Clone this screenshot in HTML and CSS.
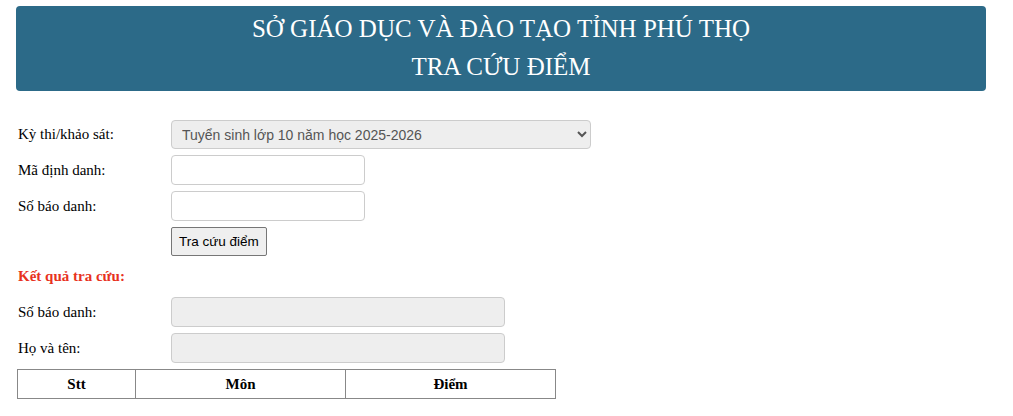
FILE: index.html
```html
<!DOCTYPE html>
<html lang="vi">
<head>
    <meta charset="UTF-8">
    <title>Tra cứu điểm</title>
    <link rel="stylesheet" href="styles.css">
</head>
<body>
    <div class="wrap">
        <div class="header">
            <div>SỞ GIÁO DỤC VÀ ĐÀO TẠO TỈNH PHÚ THỌ</div>
            <div>TRA CỨU ĐIỂM</div>
        </div>
        <div class="form">
            <div class="row">
                <label>Kỳ thi/khảo sát:</label>
                <select class="sel">
                    <option>Tuyển sinh lớp 10 năm học 2025-2026</option>
                </select>
            </div>
            <div class="row">
                <label>Mã định danh:</label>
                <input type="text" class="inp">
            </div>
            <div class="row">
                <label>Số báo danh:</label>
                <input type="text" class="inp">
            </div>
            <div class="row">
                <label></label>
                <button class="btn">Tra cứu điểm</button>
            </div>
            <div class="result-title">Kết quả tra cứu:</div>
            <div class="row">
                <label>Số báo danh:</label>
                <input type="text" class="inp ro" readonly>
            </div>
            <div class="row">
                <label>Họ và tên:</label>
                <input type="text" class="inp ro" readonly>
            </div>
            <table class="tbl">
                <tr>
                    <th class="c1">Stt</th>
                    <th class="c2">Môn</th>
                    <th class="c3">Điểm</th>
                </tr>
            </table>
        </div>
    </div>
</body>
</html>
```

FILE: styles.css
```css
*{
    margin: 0;
    padding: 0;
    box-sizing: border-box;
}
body{
    font-family: "Liberation Serif", "Times New Roman", serif;
    font-size: 15px;
    color: #000;
    background: #fff;
}
.wrap{
    width: 970px;
    margin: 6px 0 0 16px;
}
.header{
    background-color: #2c6a88;
    color: #fff;
    text-align: center;
    font-size: 25px;
    line-height: 38px;
    padding: 4px 0 5px;
    border-radius: 4px;
}
.form{
    padding: 29px 0 0 2px;
}
.row{
    display: flex;
    align-items: center;
    margin-bottom: 6px;
}
.row label{
    width: 153px;
    flex: none;
}
.sel{
    width: 420px;
    height: 29px;
    border: 1px solid #ccc;
    border-radius: 4px;
    background-color: #eee;
    color: #555;
    font-family: "Liberation Sans", Arial, sans-serif;
    font-size: 14px;
    padding: 0 6px;
}
.inp{
    width: 194px;
    height: 30px;
    border: 1px solid #ccc;
    border-radius: 4px;
    background: #fff;
    padding: 0 6px;
    font-family: "Liberation Sans", Arial, sans-serif;
    font-size: 14px;
}
.inp.ro{
    width: 334px;
    background-color: #eee;
}
.btn{
    height: 29px;
    padding: 0 7px;
    border: 1px solid #767676;
    border-radius: 2px;
    background-color: #efefef;
    font-family: "Liberation Sans", Arial, sans-serif;
    font-size: 13.5px;
    color: #000;
}
.result-title{
    color: #e8321e;
    font-weight: bold;
    padding: 6px 0 12px;
}
.tbl{
    width: 539px;
    margin-left: -1px;
    border-collapse: collapse;
}
.tbl th{
    border: 1px solid #888;
    height: 29px;
    font-size: 15px;
    text-align: center;
}
.c1{
    width: 118px;
}
.c2{
    width: 210px;
}
```
